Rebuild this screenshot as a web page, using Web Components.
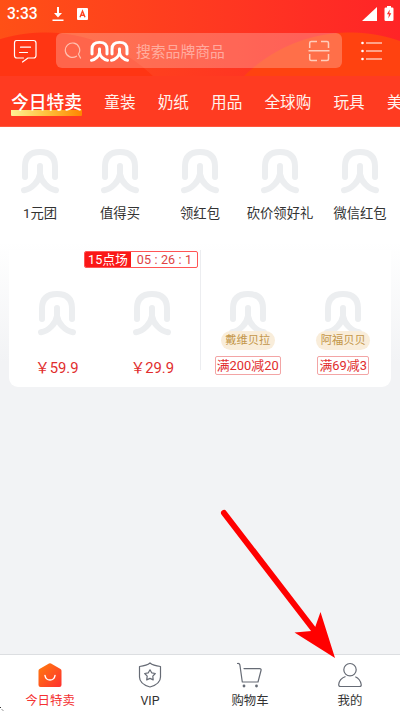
<!DOCTYPE html>
<html lang="zh-CN">
<head>
<meta charset="utf-8">
<title>今日特卖</title>
<style>
html,body{margin:0;height:100%;overflow:hidden}
body{font-family:Roboto,"Noto Sans CJK SC",sans-serif;color:#333}
</style>
</head>
<body>
<shop-app></shop-app>
<script>
function define(name, render) {
  customElements.define(name, class extends HTMLElement {
    connectedCallback() {
      if (this.shadowRoot) return;
      this.attachShadow({mode: 'open'}).innerHTML = render(this);
    }
  });
}
const shell = '<path d="M4 28V17.5C4 8 9 3 19 3S34 8 34 17.5V28"/><path d="M19 17V25C18 32 11 40 3 41.3M19 25C20 32 27 40 35 41.3"/>';

define('shell-mark', () => `<style>
:host{display:block;width:38px;height:45px;color:#eceef0}svg{display:block;width:100%;height:100%}</style>
<svg viewBox="0 0 38 45" preserveAspectRatio="none" fill="none" stroke="currentColor" stroke-width="6" stroke-linecap="round" stroke-linejoin="round">${shell}</svg>`);

define('status-bar', () => `<style>
:host{display:flex;height:27px;color:#fff;align-items:center;box-sizing:border-box;padding:0 6px 0 7px;font:500 15.6px/27px Roboto,sans-serif}
svg{display:block}span{padding-top:2px}.dl{margin-left:14.500px}.a{margin-left:12.500px}.sig{margin-left:auto}.bat{margin-left:7px}
</style><span>3:33</span>
<svg class="dl" width="12" height="16" viewBox="0 0 12 16"><path d="M5 1h2v6h3l-4 4.6L2 7h3zM.5 13.6h11V15H.5z" fill="#fff"/></svg>
<svg class="a" width="11" height="12" viewBox="0 0 11 12"><rect width="11" height="12" rx="1" fill="#fff"/><path d="M3 9.2 5.5 3 8 9.2M3.8 7.2h3.4" fill="none" stroke="#ff4422" stroke-width="1.4"/></svg>
<svg class="sig" width="15" height="14" viewBox="0 0 15 14"><path d="M15 0v14H0z" fill="#fff"/></svg>
<svg class="bat" width="10" height="15" viewBox="0 0 10 15"><path d="M3 0h4v1.5h1.2q1.3 0 1.3 1.3v10.9Q9.500 15 8.200 15H1.800Q.5 15 .5 13.700V2.800Q.5 1.500 1.800 1.500H3z" fill="#fff"/><path d="M5.800 3.500 2.900 8.300h2L4.300 12.500 7.300 7.200H5.300z" fill="#ff2a27"/></svg>`);

define('search-header', () => `<style>
:host{display:flex;height:49px;box-sizing:border-box;padding:6px 17px 8px 13px;align-items:center;color:#fff}
svg{display:block;flex:none}.box{display:flex;align-items:center;width:286px;height:35px;margin-left:18px;border-radius:6px;background:rgba(255,255,255,.24);box-sizing:border-box;padding:0 12px 0 8px;font-size:14.800px;color:rgba(255,255,255,.45)}
.logo{display:flex;gap:1px;margin:1px 7px 0 8px}.logo shell-mark{width:19px;height:21px;color:#fff}.box .scan{margin-left:auto}.menu{margin-left:19px}
</style>
<svg width="25" height="24" viewBox="0 0 25 24" fill="none" stroke="#fff" stroke-width="1.2" stroke-linejoin="round" stroke-linecap="round"><path d="M3.500 1.500h17q2.500 0 2.500 2.500v12.500q0 2.500-2.500 2.500H15l-5.500 4M3.500 1.500Q1.500 1.500 1.500 4v12.500Q1.500 19 4 19h6.500M7.500 8.200h10M6.500 13.500h8"/></svg>
<div class="box"><svg width="18" height="18" viewBox="0 0 18 18" fill="none" stroke="#ffc0b0" stroke-width="1.2" stroke-linecap="round"><path d="M12.500 14.200a7.200 7.200 0 1 1 2-2L16.500 16"/></svg>
<div class="logo"><shell-mark></shell-mark><shell-mark></shell-mark></div><span>搜索品牌商品</span>
<svg class="scan" width="22" height="22" viewBox="0 0 22 22" fill="none" stroke="#ffcdbb" stroke-width="1.500"><path d="M1.700 8V3q0-1.500 1.500-1.500H9M13 1.500h6q1.500 0 1.500 1.500V8M1.700 14v5q0 1.500 1.500 1.500H9M13 20.500h6q1.500 0 1.500-1.500V14M.5 10.800h21"/></svg></div>
<svg class="menu" width="22" height="20" viewBox="0 0 22 20"><path d="M5 2h16M5 10h16M5 18h16" stroke="#fff" stroke-width="1.200"/><g fill="#fff"><circle cx="1.500" cy="2" r="1.300"/><circle cx="1.500" cy="10" r="1.300"/><circle cx="1.500" cy="18" r="1.300"/></g></svg>`);

define('top-banner', () => `<style>
:host{display:block;height:76px;background:radial-gradient(circle at 45px 188px,#ff3513 0 155px,transparent 156px),radial-gradient(circle at 350px 183px,#ff4210 0 150px,transparent 151px),linear-gradient(90deg,#ff5016,#ff3a20 50%,#ff2427)}
</style><slot></slot>`);

define('category-tabs', () => `<style>
:host{display:flex;height:50.500px;box-sizing:border-box;padding:14px 0 0 11px;gap:22.200px;background:#ff3b21;border-bottom:1px solid #ff573c;overflow:hidden;white-space:nowrap;color:#fff3ee;font-size:15.600px;line-height:27px}
b{font-weight:500;font-size:17.800px;line-height:25px;color:#fff;height:26px;background:linear-gradient(90deg,#fff195,#ffc13d 50%,#ff8500) 0 100%/100% 6px no-repeat;border-radius:1px}
</style><b>今日特卖</b><span>童装</span><span>奶纸</span><span>用品</span><span>全球购</span><span>玩具</span><span>美</span>`);

define('quick-link', () => `<style>
:host{display:flex;flex-direction:column;align-items:center;width:80px;font-size:13.300px;line-height:20px;white-space:nowrap;color:#333}shell-mark{margin-bottom:10px}</style><shell-mark></shell-mark><slot></slot>`);

define('quick-links', () => `<style>:host{display:flex;padding-top:22.500px;height:123px;box-sizing:border-box}</style><slot></slot>`);

define('countdown-badge', () => `<style>
:host{display:flex;width:114px;height:17px;box-sizing:border-box;border:1px solid #f55;border-radius:2px;font-size:12.600px;line-height:15px;overflow:hidden;color:#de4343;background:#fff}
b{font-weight:400;background:#fa1717;color:#fff;width:46px;text-align:center;letter-spacing:.2px}span{flex:1;text-align:center;white-space:pre;letter-spacing:.15px;padding-left:1px}
</style><b>15点场</b><span>05 : 26 : 1</span>`);

define('promo-item', el => `<style>
:host{display:flex;flex-direction:column;align-items:center;width:95.500px;padding-top:41.500px;box-sizing:border-box;color:#e12d2d;white-space:nowrap}
.price{font-size:14.800px;line-height:22px;margin-top:20.500px}.coupon{font-size:12.900px;line-height:17px;margin-top:6px;border:1px solid #f3a5a5;border-radius:2px;padding:0 1px}
.name{font-size:11.300px;line-height:19px;border-radius:10px;padding:0 4.200px;color:#c39649;background:#f9edda;margin-top:-5px;position:relative}
</style><shell-mark></shell-mark>${el.hasAttribute('brand') ? `<span class="name">${el.getAttribute('brand')}</span><span class="coupon"><slot></slot></span>` : `<span class="price"><slot></slot></span>`}`);

define('promo-card', () => `<style>
:host{display:block;position:relative;margin:0 9px;height:137px;border-radius:0 0 9px 9px;background:#fff}
.items{display:flex}countdown-badge{position:absolute;left:75px;top:1px}i{position:absolute;left:191px;top:0;width:1px;height:120px;background:#ecedf0}
</style><div class="items"><slot></slot></div><i></i><countdown-badge></countdown-badge>`);

define('nav-item', () => `<style>
:host{display:flex;flex-direction:column;align-items:center;flex:1;padding-top:7px;font-size:12.400px;line-height:18px;color:#333}
:host([active]){color:#f43131}::slotted(svg){display:block;margin-bottom:3.500px}
</style><slot name="icon"></slot><slot></slot>`);

define('bottom-nav', () => `<style>
:host{display:flex;height:57px;box-sizing:border-box;border-top:1px solid #dcdee1;background:#fff;flex:none}
</style>
<nav-item active><svg slot="icon" width="26" height="26" viewBox="0 0 26 26"><defs><linearGradient id="g" x1="0" y1="0" x2="1" y2="1"><stop stop-color="#ff7d0c"/><stop offset="1" stop-color="#ff3030"/></linearGradient></defs><path d="M12 1.500q1-.6 2 0l9.500 5.600q1 .6 1 1.700V23q0 2-2 2h-19q-2 0-2-2V8.800q0-1.100 1-1.700z" fill="url(#g)"/><path d="M8 13.500c1 6 9 6 10 0" fill="none" stroke="#fff" stroke-width="1.500" stroke-linecap="round"/></svg>今日特卖</nav-item>
<nav-item><svg slot="icon" width="26" height="26" viewBox="0 0 26 26" fill="none" stroke="#666b75" stroke-width="1.200" stroke-linejoin="round"><path d="M13 1Q10 3.700 2.500 4.500V15Q2.500 22 13 25 23.500 22 23.500 15V4.500Q16 3.700 13 1z"/><path d="m13 7.800 1.700 3 3.600.7-2.500 2.700.4 3.700-3.200-1.500-3.300 1.500.5-3.700-2.500-2.700 3.600-.7z"/></svg>VIP</nav-item>
<nav-item><svg slot="icon" width="26" height="26" viewBox="0 0 26 26" fill="none" stroke="#666b75" stroke-width="1.200" stroke-linejoin="round" stroke-linecap="round"><path d="M.5 1.500Q2.500 1.200 2.900 3L5.300 20H21L24 8.500Q24.500 6.600 22.600 6.600H7"/><g fill="#666b75" stroke="none"><circle cx="7" cy="24" r="1.400"/><circle cx="19.500" cy="24" r="1.400"/></g></svg>购物车</nav-item>
<nav-item><svg slot="icon" width="26" height="26" viewBox="0 0 26 26" fill="none" stroke="#666b75" stroke-width="1.200" stroke-linejoin="round"><circle cx="13" cy="7.700" r="6.200"/><path d="M8.500 14.500C4.500 16 2 19.500 1.700 22.500Q1.600 24.500 3.500 24.500H22.500Q24.500 24.500 24.200 22.500C23.700 19.500 21.500 16 18.300 14.700"/></svg>我的</nav-item>`);

define('pointer-arrow', () => `<style>
:host{position:absolute;left:216px;top:505px;width:124px;height:155px}svg{display:block}
</style><svg width="124" height="155" viewBox="0 0 124 155"><path d="M8 8 98 125" stroke="#f00" stroke-width="6" stroke-linecap="round"/><path d="M119 153 78.500 127.500 95.500 126 98.500 124 104.500 107z" fill="#f00"/></svg>`);

define('corner-mark', () => `<style>:host{position:absolute;left:0;bottom:0;width:4px;height:4px}svg{display:block}</style><svg width="4" height="4" viewBox="0 0 4 4"><path d="M0 0 1 1M2 2.500l1 1" stroke="#333"/></svg>`);

define('shop-app', () => `<style>
:host{display:flex;flex-direction:column;height:711px;width:400px;position:relative;overflow:hidden;background:#f2f3f5}
main{flex:1;min-height:0;background:linear-gradient(#fff 0 115px,#f2f3f5 235px)}
</style>
<top-banner><status-bar></status-bar><search-header></search-header></top-banner>
<category-tabs></category-tabs>
<main><quick-links><quick-link>1元团</quick-link><quick-link>值得买</quick-link><quick-link>领红包</quick-link><quick-link>砍价领好礼</quick-link><quick-link>微信红包</quick-link></quick-links>
<promo-card><promo-item>￥59.9</promo-item><promo-item>￥29.9</promo-item><promo-item brand="戴维贝拉">满200减20</promo-item><promo-item brand="阿福贝贝">满69减3</promo-item></promo-card></main>
<bottom-nav></bottom-nav><pointer-arrow></pointer-arrow><corner-mark></corner-mark>`);
</script>
</body>
</html>
